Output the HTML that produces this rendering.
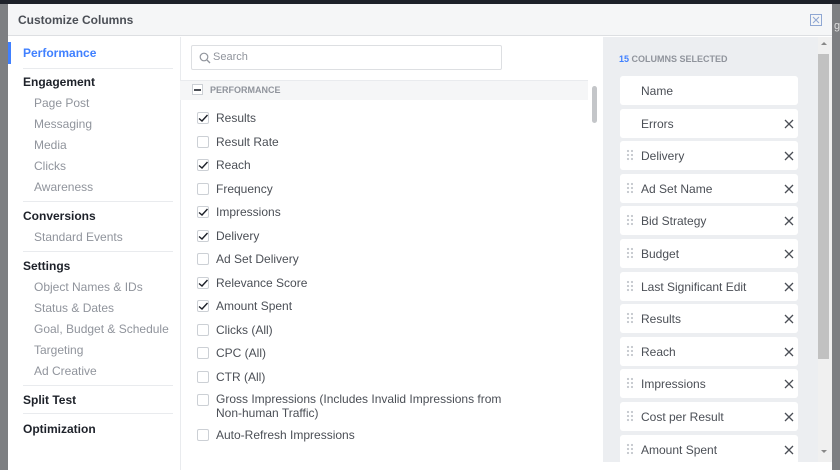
<!DOCTYPE html>
<html><head><meta charset="utf-8"><style>
*{margin:0;padding:0;box-sizing:border-box}
body{width:840px;height:470px;overflow:hidden;background:#7d7f82;font-family:"Liberation Sans",sans-serif;position:relative}
.a{position:absolute}
.top{left:0;top:0;width:840px;height:4px;background:#1d2129}
.modal{left:8px;top:4px;width:824px;height:466px;background:#fff;overflow:hidden}
.hdr{left:0;top:0;width:824px;height:32px;background:#f5f6f7;border-bottom:1px solid #dddfe2}
.hdr b{position:absolute;left:10px;top:9px;font-size:12px;color:#4b4f56}
.nav{font-size:12px}
.nh{left:15px;font-weight:bold;color:#1d2129}
.ns{left:26px;color:#90949c}
.dv{left:15px;width:150px;height:1px;background:#e9ebee}
.mid{left:172px;top:33px;width:1px;height:440px;background:#e9ebee}
.cb{width:12px;height:12px;border:1px solid #ccd0d5;border-radius:2px;background:#fff}
.lt{font-size:12px;color:#4b4f56}
.rp{left:595px;top:33px;width:229px;height:425px;background:#eceef1}
.it{left:612px;width:178px;height:29px;background:#fff;border-radius:3px;font-size:12px;color:#4b4f56}
.it span{position:absolute;left:21px;top:8px}
.it i{position:absolute;right:5px;top:10px;width:9px;height:9px;background:url("data:,") ;}
.it svg{position:absolute;right:4px;top:10px}
.it u{position:absolute;left:6px;top:8px;width:7px;height:13px;background-image:radial-gradient(circle,#c9ccd1 1.1px,transparent 1.3px);background-size:4px 4px;text-decoration:none}
</style></head><body>
<div class="a top"></div>
<div class="a" style="left:834px;top:20px;font-size:11px;color:#ddd">g</div>
<div class="a modal">
 <div class="a hdr"><b>Customize Columns</b>
  <svg class="a" style="left:802px;top:10px" width="12" height="12"><rect x="0.5" y="0.5" width="11" height="11" fill="none" stroke="#8fa7d3"/><path d="M3 3L9 9M9 3L3 9" stroke="#8fa7d3"/></svg></div>
 <div class="a" style="left:0;top:38px;width:3px;height:22px;background:#4080ff"></div>
 <div class="a nav" style="left:15px;top:42px;color:#4080ff;font-weight:bold">Performance</div>
 <div class="a dv" style="top:64px"></div>
 <div class="a nav nh" style="top:71px">Engagement</div>
 <div class="a nav ns" style="top:92px">Page Post</div>
 <div class="a nav ns" style="top:113px">Messaging</div>
 <div class="a nav ns" style="top:134px">Media</div>
 <div class="a nav ns" style="top:155px">Clicks</div>
 <div class="a nav ns" style="top:176px">Awareness</div>
 <div class="a dv" style="top:197px"></div>
 <div class="a nav nh" style="top:205px">Conversions</div>
 <div class="a nav ns" style="top:226px">Standard Events</div>
 <div class="a dv" style="top:247px"></div>
 <div class="a nav nh" style="top:255px">Settings</div>
 <div class="a nav ns" style="top:276px">Object Names &amp; IDs</div>
 <div class="a nav ns" style="top:297px">Status &amp; Dates</div>
 <div class="a nav ns" style="top:318px">Goal, Budget &amp; Schedule</div>
 <div class="a nav ns" style="top:339px">Targeting</div>
 <div class="a nav ns" style="top:360px">Ad Creative</div>
 <div class="a dv" style="top:381px"></div>
 <div class="a nav nh" style="top:389px">Split Test</div>
 <div class="a dv" style="top:409px"></div>
 <div class="a nav nh" style="top:418px">Optimization</div>
 <div class="a mid"></div>
 <div class="a" style="left:183px;top:41px;width:311px;height:25px;border:1px solid #dddfe2;border-radius:2px"></div>
 <svg class="a" style="left:191px;top:48px" width="12" height="12"><circle cx="5" cy="5" r="3.8" fill="none" stroke="#90949c" stroke-width="1.2"/><path d="M8 8L11 11" stroke="#90949c" stroke-width="1.3"/></svg>
 <div class="a" style="left:205px;top:47px;font-size:11px;color:#90949c">Search</div>
 <div class="a" style="left:172px;top:76px;width:408px;height:20px;background:#f5f6f7;border-top:1px solid #e9ebee"></div>
 <div class="a" style="left:184px;top:80px;width:11px;height:11px;border:1px solid #ccd0d5;background:#fff"></div>
 <div class="a" style="left:186px;top:85px;width:7px;height:1.5px;background:#4b4f56"></div>
 <div class="a" style="left:202px;top:81px;font-size:9px;font-weight:bold;color:#90949c">PERFORMANCE</div>
 <div class="a" style="left:584px;top:82px;width:5px;height:37px;background:#c4c6c9;border-radius:3px"></div>
 <div id="list"></div>
 <div class="a rp"></div>
 <div class="a" style="left:611px;top:50px;font-size:9px;font-weight:bold;color:#90949c"><span style="color:#4080ff">15</span> COLUMNS SELECTED</div>
 <div class="a" style="left:810px;top:33px;width:14px;height:425px;background:#f0f0f0"></div>
 <div class="a" style="left:810px;top:50px;width:11px;height:305px;background:#c1c1c1"></div>
 <div class="a" style="left:813px;top:38px;width:0;height:0;border:3px solid transparent;border-bottom-color:#888;border-top:0"></div>
 <div class="a" style="left:813px;top:446px;width:0;height:0;border:3px solid transparent;border-top-color:#888;border-bottom:0"></div>
 <div id="rl"></div>
</div>
<script>
var L=[["Results",1],["Result Rate",0],["Reach",1],["Frequency",0],["Impressions",1],["Delivery",1],["Ad Set Delivery",0],["Relevance Score",1],["Amount Spent",1],["Clicks (All)",0],["CPC (All)",0],["CTR (All)",0]];
var h="";
L.forEach(function(e,i){var y=108+i*23.5;
h+='<div class="a cb" style="left:189px;top:'+y+'px"></div>';
if(e[1])h+='<svg class="a" style="left:189px;top:'+(y)+'px" width="12" height="12"><path d="M2 6.5L5 9L10.5 3" fill="none" stroke="#1d2129" stroke-width="1.4"/></svg>';
h+='<div class="a lt" style="left:208px;top:'+(y-1)+'px">'+e[0]+'</div>';});
h+='<div class="a cb" style="left:189px;top:390px"></div><div class="a lt" style="left:208px;top:388px;line-height:14px">Gross Impressions (Includes Invalid Impressions from<br>Non-human Traffic)</div>';
h+='<div class="a cb" style="left:189px;top:425px"></div><div class="a lt" style="left:208px;top:424px">Auto-Refresh Impressions</div>';
document.getElementById("list").innerHTML=h;
var R=["Name","Errors","Delivery","Ad Set Name","Bid Strategy","Budget","Last Significant Edit","Results","Reach","Impressions","Cost per Result","Amount Spent"];
var r="";
R.forEach(function(t,i){var y=Math.round(72+i*32.6);
r+='<div class="a it" style="top:'+y+'px">'+(i>1?'<u></u>':'')+'<span>'+t+'</span>'+(i>0?'<svg width="10" height="10"><path d="M1 1L9 9M9 1L1 9" stroke="#4b4f56" stroke-width="1.3"/></svg>':'')+'</div>';});
document.getElementById("rl").innerHTML=r;
</script>
</body></html>
